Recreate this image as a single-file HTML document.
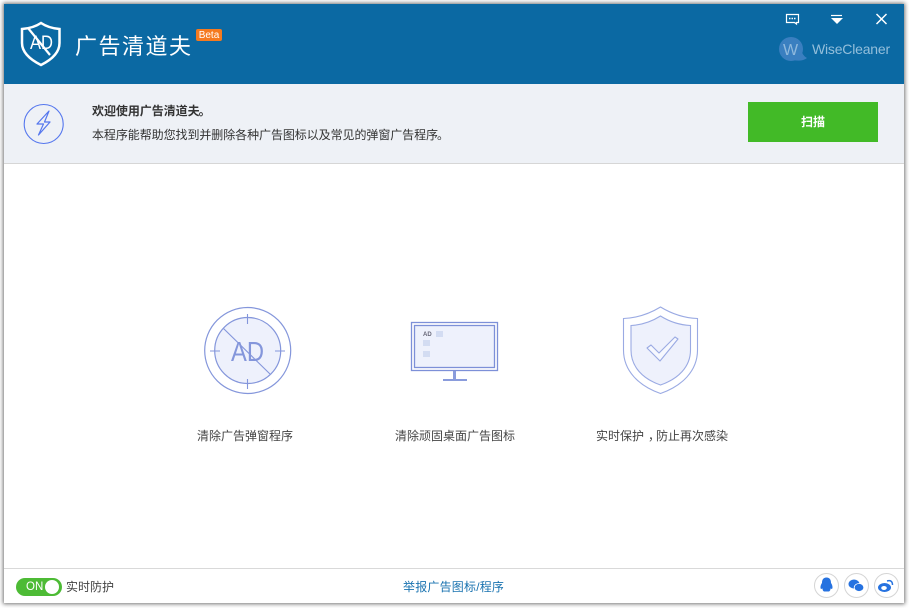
<!DOCTYPE html>
<html lang="zh">
<head>
<meta charset="utf-8">
<style>
html,body{margin:0;padding:0;background:#fff;width:909px;height:608px;overflow:hidden}
body{position:relative;font-family:"Liberation Sans","Noto Sans CJK SC",sans-serif;color:#333}
.win{position:absolute;left:4px;top:4px;width:900px;height:599px;background:#fff;box-shadow:0 0 4px 1px rgba(0,0,0,.55)}
.abs{position:absolute;white-space:nowrap}
svg{position:absolute;overflow:visible}
</style>
</head>
<body>
<div class="win"></div>
<!-- header -->
<div class="abs" style="left:4px;top:4px;width:900px;height:80px;background:#0b69a3"></div>
<svg style="left:0;top:0" width="909" height="84" fill="none">
  <path d="M41 23 C47 27 53 28.500 59.500 29 V43 C59.500 53 51 60 41 65 C31 60 22 53 22 43 V29 C29 28.500 35 27 41 23Z" stroke="#fff" stroke-width="2.500"/>
  <path d="M28 28 L50 55" stroke="#fff" stroke-width="2.200"/>
  <text x="30" y="49" font-family="Liberation Sans" font-size="19" textLength="23" lengthAdjust="spacingAndGlyphs" fill="#fff">AD</text>
</svg>
<div class="abs" style="left:75px;top:30px;font-size:22px;line-height:30px;letter-spacing:1.500px;color:#fff;font-family:'Noto Sans CJK SC',sans-serif">广告清道夫</div>
<div class="abs" style="left:196px;top:29px;width:26px;height:12px;border-radius:2px;background:#f57a1f;color:#fff;font-size:10px;line-height:13px;text-align:center">Beta</div>
<!-- window controls -->
<svg style="left:0;top:0" width="909" height="84" fill="none">
  <path d="M786.500 14.500 H798.500 V22.500 H796.500 V24 L794.500 22.500 H786.500Z" stroke="#fff" stroke-width="1.200"/>
  <path d="M789 18.500 H796" stroke="#fff" stroke-width="1.500" stroke-dasharray="1.500 1"/>
  <path d="M831 15.500 H842" stroke="#fff" stroke-width="1.200"/>
  <path d="M831 18 H843 L837 24Z" fill="#fff"/>
  <path d="M876.500 14 L886.500 24 M886.500 14 L876.500 24" stroke="#fff" stroke-width="1.500"/>
  <circle cx="791" cy="49" r="12" fill="#3a7fc0"/>
  <path d="M793 60 Q802 62 807 58 Q801 55 800 44Z" fill="#3a7fc0"/>
  <text x="783" y="55" font-family="Liberation Sans" font-size="16" fill="#8fb9dd">W</text>
</svg>
<div class="abs" style="left:812px;top:41px;font-size:14px;line-height:17px;letter-spacing:-.2px;color:#94bfdb">WiseCleaner</div>
<!-- banner -->
<div class="abs" style="left:4px;top:84px;width:900px;height:79px;background:#eef1f6;border-bottom:1px solid #d6d6d6"></div>
<svg style="left:0;top:0" width="909" height="170" fill="none">
  <circle cx="43.700" cy="124" r="19.500" stroke="#5577ee" stroke-width="1.100"/>
  <path d="M49 111 L37 124 H43.500 L38.500 135 L50 122 H44.500 Z" stroke="#5577ee" stroke-width="1.200" stroke-linejoin="round"/>
</svg>
<div class="abs" style="left:92px;top:103px;font-size:12px;line-height:16px;font-weight:bold;color:#333;letter-spacing:-.05px">欢迎使用广告清道夫<span style="margin-left:-1px">。</span></div>
<div class="abs" style="left:92px;top:127px;font-size:12px;line-height:16px;color:#333;letter-spacing:-.07px">本程序能帮助您找到并删除各种广告图标以及常见的弹窗广告程序<span style="margin-left:-1px">。</span></div>
<div class="abs" style="left:748px;top:102px;width:130px;height:40px;background:#42ba27;color:#fff;font-size:12px;line-height:40px;text-align:center;font-weight:bold">扫描</div>
<!-- feature icons -->
<svg style="left:0;top:0" width="909" height="608" fill="none">
  <!-- AD -->
  <circle cx="247.700" cy="350.500" r="43" stroke="#8496db" stroke-width="1.200"/>
  <circle cx="247.700" cy="350.500" r="33" fill="#eef1fc" stroke="#8496db" stroke-width="1.200"/>
  <path d="M247.500 314 V324 M247.500 379 V389 M210 351 H220 M275 351 H285 M223 328 L270 374" stroke="#8496db" stroke-width="1.100"/>
  <text x="231" y="361" font-family="Liberation Sans" font-size="28" textLength="33" lengthAdjust="spacingAndGlyphs" fill="#8496db">AD</text>
  <!-- monitor -->
  <rect x="411.500" y="322.500" width="86" height="48" stroke="#7d90d8" stroke-width="1.300" fill="#fff"/>
  <rect x="414.500" y="325.500" width="80" height="42" stroke="#7d90d8" stroke-width="1.300" fill="#eef1fc"/>
  <path d="M454.500 371 V380" stroke="#8a9cdc" stroke-width="3"/>
  <path d="M443 380 H467" stroke="#8a9cdc" stroke-width="2"/>
  <text x="423" y="336" font-family="Liberation Sans" font-size="6" font-weight="bold" fill="#667">AD</text>
  <rect x="436" y="331" width="7" height="6" fill="#d3dcf2"/>
  <rect x="423" y="340" width="7" height="6" fill="#d3dcf2"/>
  <rect x="423" y="351" width="7" height="6" fill="#d3dcf2"/>
  <!-- shield -->
  <path d="M660.500 307 C672 314 684 318 697.500 318.500 V350 C697.500 371 682 386 660.500 393.500 C639 386 623.500 371 623.500 350 V318.500 C637 318 649 314 660.500 307Z" stroke="#9aaae3" stroke-width="1.100" fill="#fff"/>
  <path d="M660.500 316 C670 322 680 325 690.500 325.500 V350 C690.500 367 678 379 660.500 385 C643 379 631 367 631 350 V325.500 C641 325 651 322 660.500 316Z" stroke="#9aaae3" stroke-width="1.100" fill="#eef1fc"/>
  <path d="M647 348 L651 345 L659 353 L675 337 L678 339 L660 361 Z" stroke="#9aaae3" stroke-width="1.100" fill="#f6f8fe" stroke-linejoin="round"/>
</svg>
<div class="abs" style="left:197px;top:428px;font-size:12px;line-height:17px;color:#444">清除广告弹窗程序</div>
<div class="abs" style="left:395px;top:428px;font-size:12px;line-height:17px;color:#444">清除顽固桌面广告图标</div>
<div class="abs" style="left:596px;top:428px;font-size:12px;line-height:17px;color:#444">实时保护<span style="position:relative;left:4px">，</span>防止再次感染</div>
<!-- footer -->
<div class="abs" style="left:4px;top:568px;width:900px;height:1px;background:#d9d9d9"></div>
<div class="abs" style="left:16px;top:578px;width:46px;height:18px;border-radius:9px;background:#4dbb35;color:#fff;font-size:11.500px;line-height:19px;text-indent:10px">ON</div>
<div class="abs" style="left:45px;top:580px;width:14px;height:14px;border-radius:50%;background:#fff"></div>
<div class="abs" style="left:66px;top:579px;font-size:12px;line-height:17px;color:#444">实时防护</div>
<div class="abs" style="left:403px;top:579px;font-size:12px;line-height:17px;color:#1a73b0;letter-spacing:.2px">举报广告图标/程序</div>
<svg style="left:0;top:0" width="909" height="608" fill="none">
  <circle cx="826.500" cy="585.500" r="12" stroke="#d5d5d5"/>
  <circle cx="856.500" cy="585.500" r="12" stroke="#d5d5d5"/>
  <circle cx="886.500" cy="585.500" r="12" stroke="#d5d5d5"/>
  <path d="M826.500 577.500 C830 577.500 831 580 831 583 C832.500 585 833 588 832 589 L830.500 588.500 C830.500 590 830 591 829 591.500 H824 C823 591 822.500 590 822.500 588.500 L821 589 C820 588 820.500 585 822 583 C822 580 823 577.500 826.500 577.500Z" fill="#2672e0"/>
  <ellipse cx="854" cy="584" rx="5.500" ry="4.500" fill="#2672e0"/>
  <ellipse cx="859" cy="587.500" rx="4.800" ry="4" fill="#2672e0" stroke="#fff" stroke-width=".8"/>
  <ellipse cx="884.500" cy="587.500" rx="6.500" ry="4.500" fill="#2672e0"/>
  <ellipse cx="884" cy="588" rx="2.800" ry="2" fill="#fff"/>
  <path d="M887 581 Q892.500 579.500 892.500 585" stroke="#2672e0" stroke-width="1.500"/>
</svg>
</body>
</html>
